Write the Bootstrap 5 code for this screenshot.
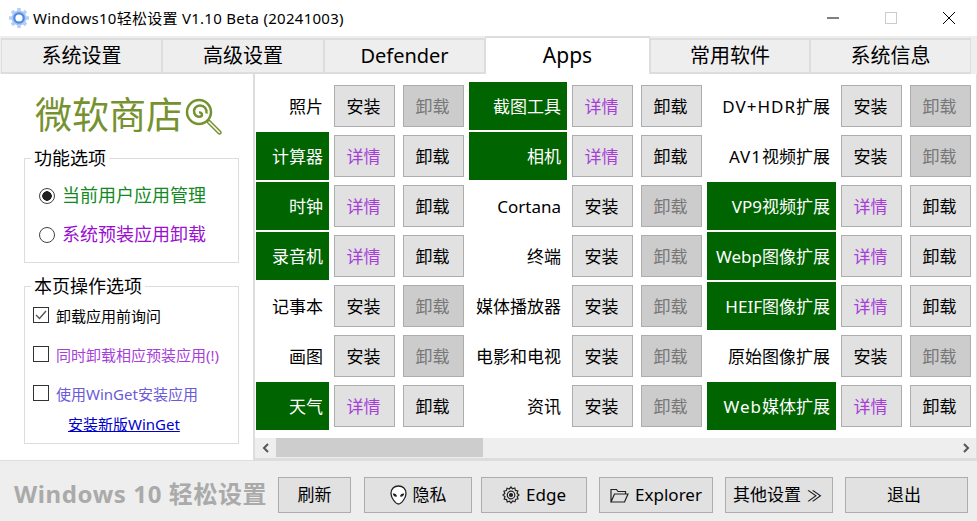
<!DOCTYPE html>
<html lang="zh"><head><meta charset="utf-8"><title>Windows10轻松设置</title>
<link href="https://cdn.jsdelivr.net/npm/bootstrap@5.3.0/dist/css/bootstrap.min.css" rel="stylesheet">
<style>
html,body{height:521px;overflow:hidden}
body{font-family:"Noto Sans","Noto Sans CJK SC",sans-serif;background:#fff;color:#000;font-size:16px;line-height:1.2}
.app-title{height:36px;padding-left:9px;font-size:15px}
.app-title .wname{margin-left:4px;letter-spacing:.27px}
.winbtns{margin-right:-1px}
.winbtn{width:58px;text-align:center;padding-bottom:4px}
.tabbar{height:38px;background:#eee;padding:2px 6px 0 1px;margin:0}
.tabbar .tabx{height:36px;width:161px;border:2px solid #ddd;border-left-width:1px;border-right-width:1px;font-size:20px;color:#000;background:#eee;display:flex;align-items:center;justify-content:center;padding:0;border-radius:0;white-space:nowrap}
.tabbar .tabx:nth-child(2){width:162px}
.tabbar .tabx.cur{height:38px;margin-top:-2px;background:#fff;border-bottom:0;width:165px;font-size:21px}
.tabbar .tabx:nth-child(5){width:160px}
.mainrow{height:386px}
.leftpane{width:253px;padding:16px 14px 0 24px}
.bigtitle{color:#76922f;font-size:37px;line-height:50px;margin-left:11px;height:50px;white-space:nowrap}
.bigtitle svg{margin-left:2px;vertical-align:-7px}
.gbox{border:1px solid #ddd;position:relative;margin-top:18px}
.gbox .gcap{position:absolute;left:6px;top:-12px;background:#fff;padding:0 3px;font-size:18px;line-height:22px}
.gone{height:105px;padding:17px 0 0 14px}
.gtwo{height:158px;padding:20px 0 0 8px;margin-top:23px;font-size:15px}
.radrow{height:39px;font-size:18px;display:flex;align-items:center;gap:7px}
.raddot{width:16px;height:16px;margin:0!important;border-color:#444;background-color:#fff;flex:none}
.raddot:checked{background-color:#fff;border-color:#444;background-image:radial-gradient(circle,#222 0 4.500px,transparent 5px)}
.chkrow{height:39px;display:flex;align-items:flex-start;gap:7px;white-space:nowrap}
.chkbox{width:16px;height:16px;border:1px solid #333;flex:none;display:flex;align-items:center;justify-content:center}
.c-violet{color:#a63fd8}.c-blue{color:#6a5ad8}.c-green{color:#128a22}.c-purple{color:#9a0fd0}
.gtwo a{color:#00c;display:block;margin-left:35px;margin-top:-9px;text-align:left}
.gridpane{flex:1;border-left:2px solid #ddd;border-right:1px solid #ddd;border-bottom:2px solid #ddd;display:flex;flex-direction:column}
.appgrid{flex:1;display:grid;grid-template-columns:73px 66px 69px 103px 66px 69px 134px 66px 69px;grid-auto-rows:48px;row-gap:2px;padding:8px 0 0 1px;align-content:start}
.appgrid>div{display:flex;align-items:center;justify-content:flex-end;padding:2px 6px 0 0;font-size:17px;white-space:nowrap;margin-left:5px}
.appgrid>div:nth-child(9n+1){margin-left:0}
.appgrid>div.on{background:#006400;color:#fff}
.appgrid>div .wide{letter-spacing:1px}
.appgrid .act{width:61px;height:42px;align-self:center;justify-self:end;border:1px solid #adadad;background:#e1e1e1;border-radius:0;padding:1px 2px 0 0;font-size:17px;color:#000}
.appgrid .act.off{background:#ccc;color:#777}
.appgrid .act.det{color:#a63fd8}
.hscroll{height:20px;background:#eee;display:flex;align-items:stretch}
.hscroll .arrowb{width:21px;display:flex;align-items:center;justify-content:center}
.hscroll .thumb{width:207px;background:#cdcdcd;margin-bottom:1px}
.footbar{height:61px;background:#eee;border-top:1px solid #ddd;padding:16px 0 0 14px;display:flex}
.brandtxt{font-size:24px;letter-spacing:.6px;font-weight:700;color:#aaa;line-height:34px;width:264px;white-space:nowrap}
.footbtn{height:36px;border:1px solid #adadad;background:#e1e1e1;border-radius:0;padding:0;font-size:17px;color:#000;display:flex;align-items:center;justify-content:center;gap:6px;white-space:nowrap}
.fb1{width:73px}.fb2{width:108px;margin-left:13px}.fb3{width:106px;margin-left:9px}.fb4{width:114px;margin-left:12px}.fb5{width:108px;margin-left:12px;padding-right:3px}.fb6{width:123px;margin-left:12px;padding-right:5px}
.dblarrow{font-size:15px}
</style></head><body>
<div class="app-title d-flex align-items-center">
<svg width="20" height="20" viewBox="0 0 20 20"><g stroke="#b4d0f6" stroke-width="3.500"><path d="M10 0v20M0 10h20M3 3l14 14M17 3L3 17"/></g><circle cx="10" cy="10" r="7.500" fill="#a9c8f4"/><circle cx="10" cy="10" r="5.800" fill="#4f88e2"/><circle cx="10" cy="10" r="3.600" fill="#fff"/></svg>
<span class="wname flex-grow-1">Windows10轻松设置 V1.10 Beta (20241003)</span>
<div class="d-flex winbtns">
<div class="winbtn"><svg width="12" height="12" viewBox="0 0 12 12"><path d="M0 6h12" stroke="#000"/></svg></div>
<div class="winbtn"><svg width="12" height="12" viewBox="0 0 12 12"><rect x=".5" y=".5" width="11" height="11" fill="none" stroke="#ccc"/></svg></div>
<div class="winbtn"><svg width="12" height="12" viewBox="0 0 12 12"><path d="M0 0l12 12M12 0L0 12" stroke="#000"/></svg></div>
</div></div>
<nav class="nav tabbar flex-nowrap">
<a class="nav-link tabx">系统设置</a><a class="nav-link tabx">高级设置</a><a class="nav-link tabx">Defender</a><a class="nav-link tabx cur">Apps</a><a class="nav-link tabx">常用软件</a><a class="nav-link tabx">系统信息</a>
</nav>
<div class="d-flex mainrow">
<div class="leftpane">
<div class="bigtitle">微软商店<svg width="38" height="38" viewBox="0 0 38 38" fill="none" stroke="#76922f"><circle cx="14" cy="14" r="12" stroke-width="2.500"/><path d="M14 14.500a2.500 2.500 0 0 1 3 2.500c-.5 2.500-6 2.500-7.500-1.500C8 11 11 7.500 15 7.500c4.500 0 7 3.500 6.500 8" stroke-width="2.500"/><path d="M24 24l10.500 10.500" stroke-width="4.500" stroke-linecap="round"/><path d="M24 24l10.500 10.500" stroke="#fff" stroke-width="1.500" stroke-linecap="round"/></svg></div>
<div class="gbox gone"><span class="gcap">功能选项</span>
<label class="radrow c-green"><input class="form-check-input raddot" type="radio" name="r" checked>当前用户应用管理</label>
<label class="radrow c-purple"><input class="form-check-input raddot" type="radio" name="r">系统预装应用卸载</label>
</div>
<div class="gbox gtwo"><span class="gcap">本页操作选项</span>
<div class="chkrow"><span class="chkbox"><svg width="12" height="10" viewBox="0 0 12 10"><path d="M1 5l3.500 3.500L11 1" fill="none" stroke="#555" stroke-width="1.400"/></svg></span>卸载应用前询问</div>
<div class="chkrow c-violet"><span class="chkbox"></span>同时卸载相应预装应用(!)</div>
<div class="chkrow c-blue"><span class="chkbox"></span>使用WinGet安装应用</div>
<a href="#">安装新版WinGet</a>
</div>
</div>
<div class="gridpane">
<div class="appgrid">
<div>照片</div><button class="btn act">安装</button><button class="btn act off">卸载</button>
<div class="on">截图工具</div><button class="btn act det">详情</button><button class="btn act">卸载</button>
<div><span class="wide">DV+HDR</span>扩展</div><button class="btn act">安装</button><button class="btn act off">卸载</button>
<div class="on">计算器</div><button class="btn act det">详情</button><button class="btn act">卸载</button>
<div class="on">相机</div><button class="btn act det">详情</button><button class="btn act">卸载</button>
<div><span class="wide">AV1</span>视频扩展</div><button class="btn act">安装</button><button class="btn act off">卸载</button>
<div class="on">时钟</div><button class="btn act det">详情</button><button class="btn act">卸载</button>
<div>Cortana</div><button class="btn act">安装</button><button class="btn act off">卸载</button>
<div class="on">VP9视频扩展</div><button class="btn act det">详情</button><button class="btn act">卸载</button>
<div class="on">录音机</div><button class="btn act det">详情</button><button class="btn act">卸载</button>
<div>终端</div><button class="btn act">安装</button><button class="btn act off">卸载</button>
<div class="on">Webp图像扩展</div><button class="btn act det">详情</button><button class="btn act">卸载</button>
<div>记事本</div><button class="btn act">安装</button><button class="btn act off">卸载</button>
<div>媒体播放器</div><button class="btn act">安装</button><button class="btn act off">卸载</button>
<div class="on">HEIF图像扩展</div><button class="btn act det">详情</button><button class="btn act">卸载</button>
<div>画图</div><button class="btn act">安装</button><button class="btn act off">卸载</button>
<div>电影和电视</div><button class="btn act">安装</button><button class="btn act off">卸载</button>
<div>原始图像扩展</div><button class="btn act">安装</button><button class="btn act off">卸载</button>
<div class="on">天气</div><button class="btn act det">详情</button><button class="btn act">卸载</button>
<div>资讯</div><button class="btn act">安装</button><button class="btn act off">卸载</button>
<div class="on"><span class="wide">Web</span>媒体扩展</div><button class="btn act det">详情</button><button class="btn act">卸载</button>
</div>
<div class="hscroll">
<div class="arrowb"><svg width="8" height="10" viewBox="0 0 8 10"><path d="M6 1L2 5l4 4" fill="none" stroke="#555" stroke-width="2"/></svg></div>
<div class="thumb"></div><div class="flex-grow-1"></div>
<div class="arrowb"><svg width="8" height="10" viewBox="0 0 8 10"><path d="M2 1l4 4-4 4" fill="none" stroke="#555" stroke-width="2"/></svg></div>
</div>
</div>
</div>
<div class="footbar">
<div class="brandtxt">Windows 10 轻松设置</div>
<button class="btn footbtn fb1">刷新</button>
<button class="btn footbtn fb2"><svg width="17" height="20" viewBox="0 0 17 20"><path d="M8.500 1C4 1 1 4 1 8.500c0 4 4.500 10.500 7.500 10.500S16 12.500 16 8.500C16 4 13 1 8.500 1z" fill="#fff" stroke="#222" stroke-width="1.300"/><path d="M2.800 8.500c2-.5 4 .8 4.200 3-2.200.6-4-.8-4.200-3zM14.200 8.500c-2-.5-4 .8-4.200 3 2.200.6 4-.8 4.200-3z" fill="#222"/></svg>隐私</button>
<button class="btn footbtn fb3"><svg width="18" height="18" viewBox="0 0 18 18" fill="none" stroke="#222" stroke-width="1.200"><path d="M9 1l1.500 1.800 2.300-.8.6 2.400 2.400.6-.8 2.300L17 9l-1.800 1.500.8 2.300-2.400.6-.6 2.400-2.300-.8L9 17l-1.500-1.800-2.300.8-.6-2.400-2.400-.6.8-2.300L1 9l1.800-1.500-.8-2.300 2.400-.6.600-2.400 2.300.8z"/><circle cx="9" cy="9" r="3.800"/><circle cx="9" cy="9" r="1.500" fill="#222"/></svg>Edge</button>
<button class="btn footbtn fb4"><svg width="19" height="15" viewBox="0 0 19 15" fill="none" stroke="#222" stroke-width="1.200"><path d="M1 14V1.500h5.500L8 3.500h7.500V6M1 14h13.500L18 6H4.500z"/></svg>Explorer</button>
<button class="btn footbtn fb5">其他设置<span class="dblarrow">≫</span></button>
<button class="btn footbtn fb6">退出</button>
</div>
<script src="https://cdn.jsdelivr.net/npm/bootstrap@5.3.0/dist/js/bootstrap.bundle.min.js"></script>
</body></html>
